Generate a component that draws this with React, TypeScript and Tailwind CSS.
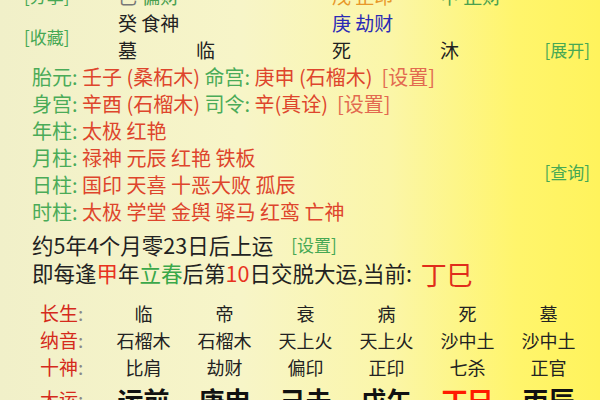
export default function App() {
  const font = "font-['Noto_Sans_CJK_SC','Noto_Sans',sans-serif]";

  const shensha = [
    { label: '年柱', items: ['太极', '红艳'] },
    { label: '月柱', items: ['禄神', '元辰', '红艳', '铁板'] },
    { label: '日柱', items: ['国印', '天喜', '十恶大败', '孤辰'] },
    { label: '时柱', items: ['太极', '学堂', '金舆', '驿马', '红鸾', '亡神'] },
  ];

  const table = [
    { label: '长生', cells: ['临', '帝', '衰', '病', '死', '墓'] },
    { label: '纳音', cells: ['石榴木', '石榴木', '天上火', '天上火', '沙中土', '沙中土'] },
    { label: '十神', cells: ['比肩', '劫财', '偏印', '正印', '七杀', '正官'] },
  ];
  const dayun = ['运前', '庚申', '己未', '戊午', '丁巳', '丙辰'];

  return (
    <div
      className={`w-[600px] h-[400px] overflow-hidden text-[#222] bg-[linear-gradient(90deg,#f1f0c9_0%,#f7f5c8_40%,#fbf6a8_65%,#fff56c_86%,#fff35c_100%)] ${font}`}
    >
      {/* 上部：藏干 / 长生 */}
      <div className="mt-[-18px] grid grid-cols-[118px_78px_136px_108px_100px_1fr] grid-rows-[27px_27px_27px] text-[19px] leading-[27px]">
        <div className="col-start-1 row-start-1 pl-[24px] text-[17px] text-[#46a854]">[分享]</div>
        <div className="col-start-2 col-span-2 row-start-1">
          <span className="text-[#777]">己</span> <span className="text-[#4aa050]">偏财</span>
        </div>
        <div className="col-start-4 row-start-1 text-[#e8982a]">戊 正印</div>
        <div className="col-start-5 row-start-1 text-[#4aa050]">甲 正财</div>

        <div className="col-start-1 row-start-2 row-span-2 self-center pl-[24px] text-[17px] text-[#46a854]">[收藏]</div>
        <div className="col-start-2 col-span-2 row-start-2">癸 食神</div>
        <div className="col-start-4 col-span-2 row-start-2 text-[#2b2bb5]">庚 劫财</div>

        <div className="col-start-2 row-start-3">墓</div>
        <div className="col-start-3 row-start-3">临</div>
        <div className="col-start-4 row-start-3">死</div>
        <div className="col-start-5 row-start-3">沐</div>
        <div className="col-start-6 row-start-3 justify-self-end pr-[10px] text-[17px] text-[#46a854]">[展开]</div>
      </div>

      {/* 胎元 / 身宫 */}
      <div className="pl-[32px] text-[20px] leading-[27px]">
        <div className="whitespace-pre">
          <span className="text-[#4aab58]">胎元: </span>
          <span className="text-[#de452c]">壬子 (桑柘木) </span>
          <span className="text-[#4aab58]">命宫: </span>
          <span className="text-[#de452c]">庚申 (石榴木)  </span>
          <span className="text-[#e26a50]">[设置]</span>
        </div>
        <div className="whitespace-pre">
          <span className="text-[#4aab58]">身宫: </span>
          <span className="text-[#de452c]">辛酉 (石榴木) </span>
          <span className="text-[#4aab58]">司令: </span>
          <span className="text-[#de452c]">辛(真诠)  </span>
          <span className="text-[#e26a50]">[设置]</span>
        </div>
      </div>

      {/* 神煞 */}
      <div className="flex items-center pl-[32px] pr-[10px] text-[20px] leading-[27px]">
        <div className="flex-1">
          {shensha.map(row => (
            <div key={row.label} className="whitespace-pre">
              <span className="text-[#4aab58]">{row.label}: </span>
              <span className="text-[#de452c]">{row.items.join(' ')}</span>
            </div>
          ))}
        </div>
        <div className="text-[17px] text-[#46a854]">[查询]</div>
      </div>

      {/* 起运 */}
      <div className="mt-[6px] flex h-[28px] items-center pl-[32px] text-[21.5px] whitespace-pre">
        <span>约5年4个月零23日后上运</span>
        <span className="ml-[18px] text-[17px] text-[#46a854]">[设置]</span>
      </div>
      <div className="flex h-[28px] items-center pl-[32px] text-[21.5px] whitespace-pre">
        <span>即每逢</span>
        <span className="text-[#e8321e]">甲</span>
        <span>年</span>
        <span className="text-[#3aa84a]">立春</span>
        <span>后第</span>
        <span className="text-[#e8321e]">10</span>
        <span>日交脱大运,当前: </span>
        <span className="ml-[4px] text-[26px] text-[#e02d1b]">丁巳</span>
      </div>

      {/* 大运表 */}
      <div className="mt-[12px] text-[18px]">
        {table.map(row => (
          <div key={row.label} className="grid h-[27px] grid-cols-[103px_repeat(6,81px)] items-center">
            <div className="pl-[40px] text-[19px]">
              <span className="text-[#d52a1c]">{row.label}</span>
              <span className="text-[#888]">:</span>
            </div>
            {row.cells.map((c, i) => (
              <div key={i} className="text-center">{c}</div>
            ))}
          </div>
        ))}
        <div className="grid h-[27px] grid-cols-[103px_repeat(6,81px)] items-center">
          <div className="pl-[40px] text-[19px]">
            <span className="text-[#d52a1c]">大运</span>
            <span className="text-[#888]">:</span>
          </div>
          {dayun.map((c, i) => (
            <div
              key={i}
              className={`text-center text-[26px] font-bold ${c === '丁巳' ? 'text-[#ff1a00]' : 'text-[#111]'}`}
            >
              {c}
            </div>
          ))}
        </div>
      </div>
    </div>
  );
}
